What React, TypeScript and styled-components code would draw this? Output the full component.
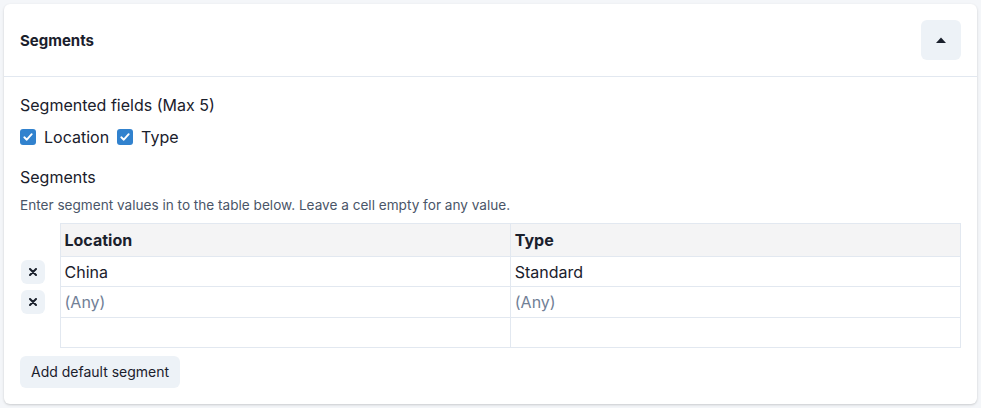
import { FC } from "react";
import styled, { createGlobalStyle } from "styled-components";

const GlobalStyle = createGlobalStyle`
  html, body {
    margin: 0;
    padding: 0;
    background: #f4f6f9;
  }
  body {
    font-family: Inter, "Noto Sans", sans-serif;
    color: #1a202c;
  }
  * {
    box-sizing: border-box;
  }
`;

interface Segment {
  location: string;
  type: string;
}

const segments: Segment[] = [
  { location: "China", type: "Standard" },
  { location: "", type: "" },
];

const CheckIcon: FC = () => (
  <svg width="12" height="12" viewBox="0 0 12 12">
    <path
      d="M2.3 6.3 L4.8 8.7 L9.7 3.2"
      fill="none"
      stroke="white"
      strokeWidth="1.9"
      strokeLinecap="round"
      strokeLinejoin="round"
    />
  </svg>
);

const CaretUp: FC = () => (
  <svg width="10" height="6" viewBox="0 0 10 6">
    <path d="M0 6 L5 0.5 L10 6 Z" fill="#1a202c" />
  </svg>
);

const CrossIcon: FC = () => (
  <svg width="8" height="8" viewBox="0 0 8 8">
    <path
      d="M1 1 L7 7 M7 1 L1 7"
      stroke="#1a202c"
      strokeWidth="2"
      strokeLinecap="round"
    />
  </svg>
);

const Field: FC<{ label: string }> = ({ label }) => (
  <CheckLabel>
    <Box>
      <CheckIcon />
    </Box>
    {label}
  </CheckLabel>
);

const App: FC = () => {
  return (
    <>
      <GlobalStyle />
      <Page>
        <Card>
          <Header>
            <Title>Segments</Title>
            <ToggleButton>
              <CaretUp />
            </ToggleButton>
          </Header>

          <Body>
            <Label>Segmented fields (Max 5)</Label>
            <Checks>
              <Field label="Location" />
              <Field label="Type" />
            </Checks>

            <Label spaced>Segments</Label>
            <Help>
              Enter segment values in to the table below. Leave a cell empty
              for any value.
            </Help>

            <Table>
              <thead>
                <tr>
                  <ActionCell />
                  <Th>Location</Th>
                  <Th>Type</Th>
                </tr>
              </thead>
              <tbody>
                {segments.map((s, i) => (
                  <tr key={i}>
                    <ActionCell>
                      <RemoveButton>
                        <CrossIcon />
                      </RemoveButton>
                    </ActionCell>
                    <Td empty={!s.location}>{s.location || "(Any)"}</Td>
                    <Td empty={!s.type}>{s.type || "(Any)"}</Td>
                  </tr>
                ))}
                <tr>
                  <ActionCell />
                  <Td />
                  <Td />
                </tr>
              </tbody>
            </Table>

            <AddButton>Add default segment</AddButton>
          </Body>
        </Card>
      </Page>
    </>
  );
};

const Page = styled.div`
  padding: 4px;
`;

const Card = styled.div`
  background: #ffffff;
  border-radius: 6px;
  box-shadow: 0 1px 3px rgba(0, 0, 0, 0.12), 0 1px 2px rgba(0, 0, 0, 0.06);
  height: 400px;
`;

const Header = styled.div`
  height: 73px;
  padding: 16px;

  display: flex;
  align-items: center;
  justify-content: space-between;

  border-bottom: 1px solid #e2e8f0;
`;

const Title = styled.span`
  font-size: 15px;
  font-weight: 700;
  color: #1a202c;
`;

const ToggleButton = styled.button`
  width: 40px;
  height: 40px;
  border: none;
  border-radius: 6px;
  background: #edf2f7;

  display: flex;
  align-items: center;
  justify-content: center;
  padding: 0;
`;

const Body = styled.div`
  padding: 16px;
  display: flex;
  flex-direction: column;
  align-items: flex-start;
`;

const Label = styled.div<{ spaced?: boolean }>`
  font-size: 16px;
  line-height: 24px;
  color: #1a202c;
  margin-top: ${({ spaced }) => (spaced ? "16px" : "0")};
`;

const Checks = styled.div`
  margin-top: 8px;
  display: flex;
  gap: 8px;
  height: 24px;
  align-items: center;
`;

const CheckLabel = styled.label`
  display: flex;
  align-items: center;
  gap: 8px;
  font-size: 16px;
  color: #1a202c;
`;

const Box = styled.span`
  width: 16px;
  height: 16px;
  border-radius: 3px;
  background: #3182ce;

  display: flex;
  align-items: center;
  justify-content: center;
`;

const Help = styled.div`
  margin-top: 6px;
  font-size: 13.6px;
  line-height: 20px;
  color: #4a5568;
`;

const Table = styled.table`
  margin-top: 8px;
  width: 100%;
  border-collapse: collapse;
  table-layout: fixed;
  font-size: 16px;
`;

const ActionCell = styled.td`
  width: 40px;
  padding: 0 0 0 1px;
  border: none;
  vertical-align: middle;
`;

const Th = styled.th`
  height: 33px;
  padding: 0 4px;
  text-align: left;
  font-weight: 700;
  background: #f4f4f5;
  border: 1px solid #e2e8f0;
  color: #1a202c;
`;

const Td = styled.td<{ empty?: boolean }>`
  height: 30.3px;
  padding: 0 4px;
  border: 1px solid #e2e8f0;
  color: ${({ empty }) => (empty ? "#718096" : "#1a202c")};
`;

const RemoveButton = styled.button`
  width: 24px;
  height: 24px;
  border: none;
  border-radius: 6px;
  background: #edf2f7;
  padding: 0;

  display: flex;
  align-items: center;
  justify-content: center;
`;

const AddButton = styled.button`
  margin-top: 8px;
  height: 32px;
  padding: 0 11px;
  border: none;
  border-radius: 6px;
  background: #edf2f7;
  font-family: inherit;
  font-size: 14px;
  color: #1a202c;
`;

export default App;
